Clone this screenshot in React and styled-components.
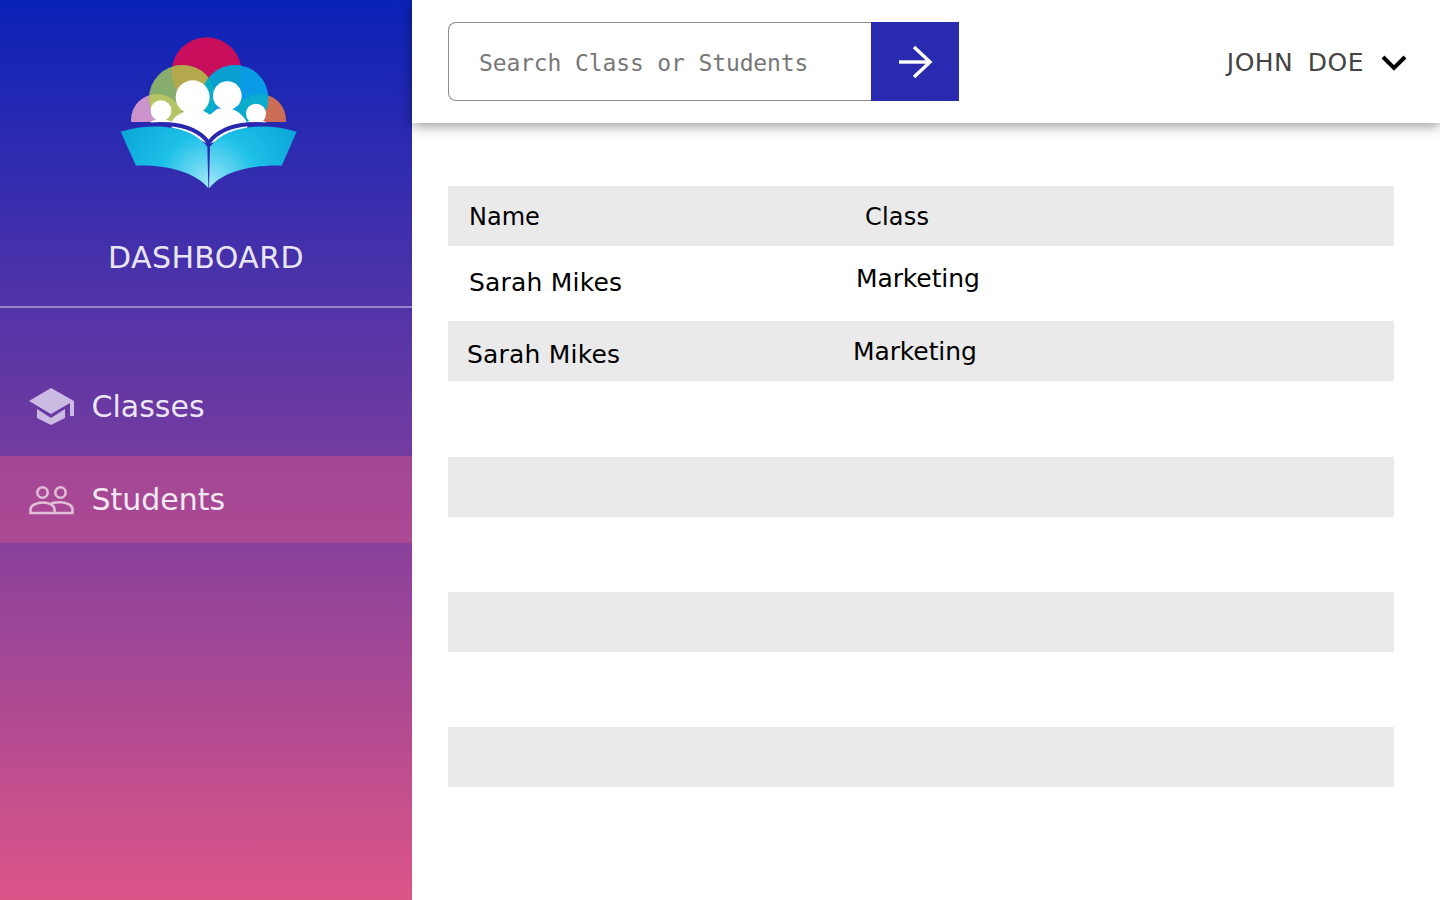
import React from "react"
import styled, { createGlobalStyle } from "styled-components"

const Global = createGlobalStyle`
  html, body {
    margin: 0;
    padding: 0;
    height: 100%;
    background: #fff;
    overflow: hidden;
    font-family: "DejaVu Sans", sans-serif;
  }
  * { box-sizing: border-box; }
`

const Page = styled.div`
  display: grid;
  grid-template-columns: 412px 1fr;
  height: 900px;
  width: 1440px;
`

const Sidebar = styled.aside`
  display: flex;
  flex-direction: column;
  background: linear-gradient(180deg, #0a22b8 0%, #dc5588 100%);
  color: rgba(255, 255, 255, 0.9);
`

const Brand = styled.div`
  display: flex;
  flex-direction: column;
  align-items: center;
  height: 308px;
  padding-top: 20px;
  border-bottom: 2px solid rgba(255, 255, 255, 0.4);
`

const Logo = styled.svg`
  display: block;
  margin-left: 8px;
`

const BrandTitle = styled.div`
  font-size: 30px;
  line-height: 36px;
  margin-top: 40px;
  letter-spacing: 0.4px;
`

const Nav = styled.nav`
  display: flex;
  flex-direction: column;
  gap: 6px;
  padding-top: 55px;
`

const NavItem = styled.div`
  display: flex;
  align-items: center;
  height: 87px;
  padding-left: 29px;
  font-size: 30px;
  background: ${(p) => (p.$active ? "rgba(200, 80, 140, 0.55)" : "transparent")};

  svg {
    flex: 0 0 45px;
    margin-right: 17.5px;
  }
`

const Main = styled.main`
  display: flex;
  flex-direction: column;
  min-width: 0;
`

const Topbar = styled.header`
  display: flex;
  align-items: center;
  justify-content: space-between;
  height: 123px;
  padding: 0 33px 0 36px;
  background: #fff;
  box-shadow: 0 3px 12px rgba(0, 0, 0, 0.4);
`

const Search = styled.form`
  display: flex;
  width: 511px;
  height: 79px;
`

const SearchInput = styled.input`
  flex: 1;
  min-width: 0;
  border: 1px solid #8c8c8c;
  border-right: 0;
  border-radius: 8px 0 0 8px;
  padding: 2px 0 0 30px;
  outline: none;
  font-family: "DejaVu Sans Mono", monospace;
  font-size: 23px;
  letter-spacing: -0.13px;
  color: #777;

  &::placeholder {
    color: #777;
    opacity: 1;
  }
`

const SearchButton = styled.button`
  display: flex;
  align-items: center;
  justify-content: center;
  width: 88px;
  border: 0;
  padding: 0;
  background: #282aaf;
`

const User = styled.div`
  display: flex;
  align-items: center;
  gap: 17px;
  padding-top: 2px;
  font-size: 25px;
  letter-spacing: 0.5px;
  word-spacing: 6px;
  color: #444;
`

const TableWrap = styled.section`
  display: flex;
  flex-direction: column;
  padding: 63px 46px 0 36px;
`

const Row = styled.div`
  display: grid;
  grid-template-columns: 400px 1fr;
  height: ${(p) => (p.$striped ? 60 : 75.25)}px;
  background: ${(p) => (p.$striped ? "#eaeaea" : "#fff")};
  color: #000;
  font-size: ${(p) => (p.$head ? 24 : 25)}px;
`

const Cell = styled.div`
  display: flex;
  align-items: center;
  padding-left: ${(p) => p.$left}px;
  padding-top: ${(p) => p.$top || 0}px;
  padding-bottom: ${(p) => p.$bottom || 0}px;
  letter-spacing: ${(p) => p.$track || 0}px;
`

function BrandLogo() {
  return (
    <Logo width="220" height="180" viewBox="0 0 660 540">
      <defs>
        <clipPath id="ground">
          <rect x="0" y="0" width="660" height="306" />
        </clipPath>
        <clipPath id="redDisc">
          <circle cx="320" cy="157" r="105" />
        </clipPath>
        <clipPath id="pinkDisc">
          <circle cx="171" cy="300" r="78" />
        </clipPath>
        <clipPath id="orangeDisc">
          <circle cx="480" cy="300" r="78" />
        </clipPath>
        <clipPath id="greenDisc">
          <circle cx="247" cy="235" r="100" />
        </clipPath>
        <radialGradient id="page" gradientUnits="userSpaceOnUse" cx="326" cy="490" r="300">
          <stop offset="0" stopColor="#9be6f8" />
          <stop offset="0.5" stopColor="#1dc0e8" />
          <stop offset="1" stopColor="#0aa6d8" />
        </radialGradient>
      </defs>
      <g clipPath="url(#ground)">
        <circle cx="320" cy="157" r="105" fill="#c90f5b" />
        <circle cx="171" cy="300" r="78" fill="#cc93cc" />
        <circle cx="480" cy="300" r="78" fill="#cc6d55" />
        <circle cx="247" cy="235" r="100" fill="#86ac6e" />
        <circle cx="405" cy="235" r="100" fill="#0a9be6" />
        <circle cx="247" cy="235" r="100" fill="#b3a94c" clipPath="url(#redDisc)" />
        <circle cx="405" cy="235" r="100" fill="#0a9fcf" clipPath="url(#redDisc)" />
        <circle cx="405" cy="235" r="100" fill="#08aec8" clipPath="url(#greenDisc)" />
        <circle cx="247" cy="235" r="100" fill="#b4c566" clipPath="url(#pinkDisc)" />
        <circle cx="405" cy="235" r="100" fill="#0aaccb" clipPath="url(#orangeDisc)" />
      </g>
      <g fill="#fff">
        <circle cx="278" cy="232" r="51" />
        <circle cx="382" cy="227" r="43" />
        <circle cx="183" cy="272" r="31" />
        <circle cx="468" cy="281" r="30" />
        <path d="M214 306 C226 285 252 272 278 270 L310 272 L330 284 L352 266 L382 264 C410 268 430 285 442 310 L442 330 L326 372 L214 322 Z" />
        <path d="M152 306 C160 296 205 296 216 306 L216 314 L152 314 Z" />
        <path d="M440 308 C448 296 490 296 500 308 Z" />
      </g>
      <path
        d="M62 335 C150 300 275 300 326 368 C377 300 502 300 590 335"
        fill="none"
        stroke="#2a28b0"
        strokeWidth="12"
      />
      <path d="M62 335 C150 308 272 312 322 380 L325 505 C282 452 190 434 108 437 Z" fill="url(#page)" />
      <path d="M590 335 C502 308 380 312 330 380 L327 505 C370 452 462 434 545 437 Z" fill="url(#page)" />
    </Logo>
  )
}

function CapIcon() {
  return (
    <svg width="45" height="37" viewBox="0 0 45 37" fill="#cbbbe2">
      <path d="M22 0 L0 13 L22 26 L41 15 V28 H45 V13 Z" />
      <path d="M8 21 L22 30 L36 21 V30 L22 37 L8 30 Z" />
    </svg>
  )
}

function PeopleIcon() {
  return (
    <svg width="45" height="30" viewBox="0 0 45 30" fill="none" stroke="#e2bdd8" strokeWidth="2.6">
      <circle cx="13.5" cy="7.5" r="5.2" />
      <circle cx="31.5" cy="7.5" r="5.2" />
      <path d="M1.5 28 V24.5 C1.5 20 8 17.5 14 17.5 C20 17.5 25.5 20 25.5 24.5 V28 Z" />
      <path d="M22 18.5 C25 17.5 28 17.2 31 17.2 C37 17.2 43.5 20 43.5 24.5 V28 H25.5" />
    </svg>
  )
}

export default function App() {
  return (
    <Page>
      <Global />
      <Sidebar>
        <Brand>
          <BrandLogo />
          <BrandTitle>DASHBOARD</BrandTitle>
        </Brand>
        <Nav>
          <NavItem>
            <CapIcon />
            Classes
          </NavItem>
          <NavItem $active>
            <PeopleIcon />
            Students
          </NavItem>
        </Nav>
      </Sidebar>
      <Main>
        <Topbar>
          <Search onSubmit={(e) => e.preventDefault()}>
            <SearchInput placeholder="Search Class or Students" />
            <SearchButton type="submit" aria-label="Search">
              <svg width="36" height="34" viewBox="0 0 36 34" fill="none" stroke="#fff" strokeWidth="3.4">
                <path d="M2 17 H33" />
                <path d="M17 2 L33 17 L17 32" />
              </svg>
            </SearchButton>
          </Search>
          <User>
            JOHN DOE
            <svg width="26" height="18" viewBox="0 0 26 18" fill="none" stroke="#000" strokeWidth="4">
              <path d="M2 3 L13 14 L24 3" />
            </svg>
          </User>
        </Topbar>
        <TableWrap>
          <Row $striped $head>
            <Cell $left={21} $top={2}>
              Name
            </Cell>
            <Cell $left={17} $top={2} $track={0.2}>
              Class
            </Cell>
          </Row>
          <Row>
            <Cell $left={21} $bottom={2} $track={0.2}>
              Sarah Mikes
            </Cell>
            <Cell $left={8} $bottom={11} $track={-0.1}>
              Marketing
            </Cell>
          </Row>
          <Row $striped>
            <Cell $left={19} $top={6} $track={0.2}>
              Sarah Mikes
            </Cell>
            <Cell $left={5} $track={-0.1}>
              Marketing
            </Cell>
          </Row>
          <Row />
          <Row $striped />
          <Row />
          <Row $striped />
          <Row />
          <Row $striped />
        </TableWrap>
      </Main>
    </Page>
  )
}
